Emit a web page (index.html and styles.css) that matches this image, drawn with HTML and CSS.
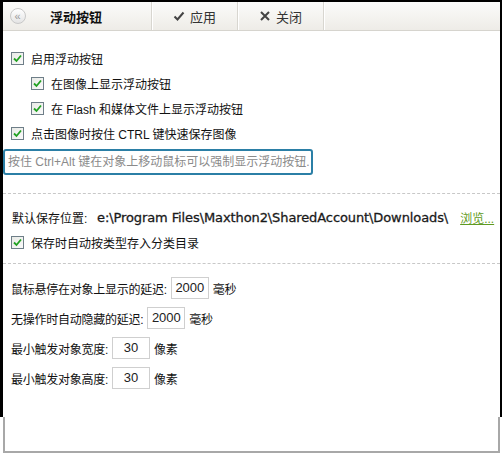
FILE: index.html
```html
<!DOCTYPE html>
<html>
    <head>
        <meta charset="utf-8">
        <title>浮动按钮</title>
        <link rel="stylesheet" href="styles.css">
    </head>
    <body>
        <div class="window">
            <div class="toolbar">
                <div class="tb-back">
                    <span class="back-btn">«</span>
                </div>
                <div class="tb-title">浮动按钮</div>
                <div class="tb-btn">
                    <svg class="tb-icon" width="12" height="12" viewBox="0 0 12 12"><path d="M1.5 6.5 L4.5 9.5 L10.5 2.5" fill="none" stroke="#444" stroke-width="2"/></svg>
                    应用
                </div>
                <div class="tb-btn">
                    <svg class="tb-icon" width="12" height="12" viewBox="0 0 12 12"><path d="M2 2 L10 10 M10 2 L2 10" fill="none" stroke="#444" stroke-width="2"/></svg>
                    关闭
                </div>
                <div class="tb-rest"></div>
            </div>

            <div class="content">
                <div class="section">
                    <label class="row">
                        <span class="cb"><svg width="9" height="9" viewBox="0 0 9 9"><path d="M1 4.5 L3.5 7 L8 1.5" fill="none" stroke="#21a121" stroke-width="1.8"/></svg></span>
                        启用浮动按钮
                    </label>
                    <label class="row sub">
                        <span class="cb"><svg width="9" height="9" viewBox="0 0 9 9"><path d="M1 4.5 L3.5 7 L8 1.5" fill="none" stroke="#21a121" stroke-width="1.8"/></svg></span>
                        在图像上显示浮动按钮
                    </label>
                    <label class="row sub">
                        <span class="cb"><svg width="9" height="9" viewBox="0 0 9 9"><path d="M1 4.5 L3.5 7 L8 1.5" fill="none" stroke="#21a121" stroke-width="1.8"/></svg></span>
                        在 Flash 和媒体文件上显示浮动按钮
                    </label>
                    <label class="row">
                        <span class="cb"><svg width="9" height="9" viewBox="0 0 9 9"><path d="M1 4.5 L3.5 7 L8 1.5" fill="none" stroke="#21a121" stroke-width="1.8"/></svg></span>
                        点击图像时按住 CTRL 键快速保存图像
                    </label>
                    <div class="hint">按住 Ctrl+Alt 键在对象上移动鼠标可以强制显示浮动按钮.</div>
                </div>

                <div class="section dashed">
                    <div class="row path-row">
                        <span class="path-label">默认保存位置:</span>
                        <span class="path">e:\Program Files\Maxthon2\SharedAccount\Downloads\</span>
                        <a class="browse" href="#">浏览...</a>
                    </div>
                    <label class="row">
                        <span class="cb"><svg width="9" height="9" viewBox="0 0 9 9"><path d="M1 4.5 L3.5 7 L8 1.5" fill="none" stroke="#21a121" stroke-width="1.8"/></svg></span>
                        保存时自动按类型存入分类目录
                    </label>
                </div>

                <div class="section dashed fields">
                    <div class="field">鼠标悬停在对象上显示的延迟: <span class="num">2000</span> 毫秒</div>
                    <div class="field">无操作时自动隐藏的延迟: <span class="num">2000</span> 毫秒</div>
                    <div class="field">最小触发对象宽度: <span class="num">30</span> 像素</div>
                    <div class="field">最小触发对象高度: <span class="num">30</span> 像素</div>
                </div>
            </div>
        </div>
        <div class="frame-bottom"></div>
    </body>
</html>
```

FILE: styles.css
```css
* {
    margin: 0;
    padding: 0;
    box-sizing: border-box;
}

body {
    width: 502px;
    height: 453px;
    background: #fff;
    font-family: "Liberation Sans", "Noto Sans CJK SC", sans-serif;
    font-size: 12px;
    color: #111;
    overflow: hidden;
}

.window {
    height: 417px;
    border-top: 2px solid #000;
    border-left: 3px solid #000;
    border-right: 2px solid #000;
    background: #fff;
}

.frame-bottom {
    height: 36px;
    margin-left: 3px;
    margin-right: 2px;
    border-left: 2px solid #a8a8a8;
    border-right: 2px solid #a8a8a8;
    border-bottom: 2px solid #a8a8a8;
}

/* toolbar */
.toolbar {
    display: flex;
    height: 29px;
    background: linear-gradient(#fbfbfa, #eeece7);
    border-bottom: 1px solid #d6d4ce;
}

.toolbar > div {
    display: flex;
    align-items: center;
    justify-content: center;
    border-right: 1px solid #d8d6d0;
    box-shadow: 1px 0 0 #fff;
}

.tb-back {
    width: 27px;
    border-right: none !important;
    box-shadow: none !important;
}

.back-btn {
    display: flex;
    align-items: center;
    justify-content: center;
    width: 16px;
    height: 16px;
    border-radius: 50%;
    border: 1px solid #c8c8c8;
    background: linear-gradient(#fff, #e4e4e4);
    color: #999;
    font-size: 11px;
    line-height: 1;
    margin-left: 2px;
}

.tb-title {
    width: 122px;
    justify-content: flex-start !important;
    padding-left: 20px;
    font-weight: bold;
    font-size: 13px;
    color: #111;
}

.tb-btn {
    width: 86px;
    gap: 5px;
    font-size: 13px;
    color: #333;
}

.tb-icon {
    display: block;
}

.tb-rest {
    flex: 1;
    border-right: none !important;
    box-shadow: none !important;
}

/* content */
.section {
    padding-top: 15px;
}

.row {
    display: flex;
    align-items: center;
    height: 25px;
    padding-left: 8px;
    gap: 7px;
}

.row.sub {
    padding-left: 28px;
}

.cb {
    display: flex;
    align-items: center;
    justify-content: center;
    width: 13px;
    height: 13px;
    border: 1px solid #6e7e88;
    background: linear-gradient(135deg, #e8eae6, #fafafa);
}

.hint {
    margin-top: 3px;
    width: 310px;
    height: 26px;
    line-height: 22px;
    padding-left: 3px;
    border: 2px solid #2b7fa6;
    border-radius: 3px;
    color: #8a8a8a;
    white-space: nowrap;
}

.dashed {
    margin-top: 18px;
    border-top: 1px dashed #c8c8c8;
    padding-top: 10px;
}

.path-row {
    height: 26px;
    gap: 0;
    white-space: nowrap;
}

.path-label {
    width: 86px;
    flex-shrink: 0;
    padding-left: 1px;
}

.path {
    flex-shrink: 0;
    font-family: "DejaVu Sans", sans-serif;
    font-size: 13px;
    color: #1a1a1a;
    letter-spacing: -0.1px;
    -webkit-text-stroke: 0.3px #1a1a1a;
}

.browse {
    flex-shrink: 0;
    margin-left: 12px;
    color: #5f9a22;
    text-decoration: underline;
}

.fields {
    margin-top: 8px;
    padding-top: 9px;
}

.field {
    display: flex;
    align-items: center;
    gap: 4px;
    height: 30px;
    padding-left: 8px;
    letter-spacing: -0.25px;
}

.num {
    display: inline-block;
    width: 38px;
    height: 22px;
    line-height: 20px;
    text-align: center;
    border: 1px solid #cfcfcf;
    background: #fff;
    font-size: 13px;
    color: #222;
    letter-spacing: 0;
}
```
